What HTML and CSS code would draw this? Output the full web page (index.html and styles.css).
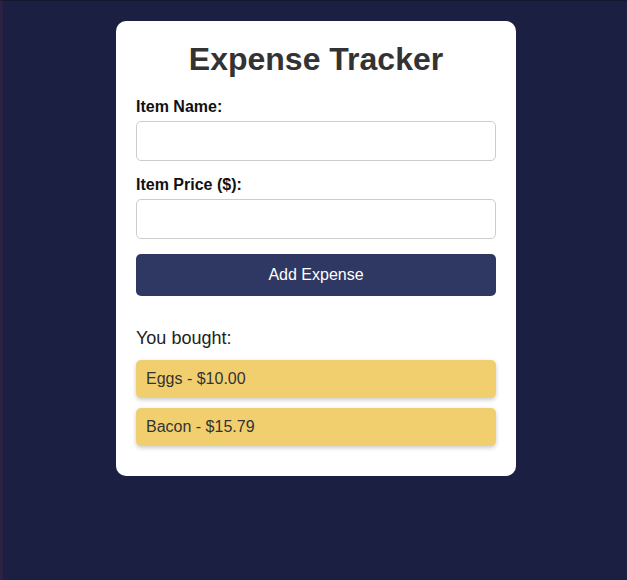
FILE: index.html
```html
<!DOCTYPE html>
<html>
<head>
<meta charset="utf-8">
<link rel="stylesheet" href="styles.css">
</head>
<body>
<div class="page">
  <div class="card">
    <h1 class="title">Expense Tracker</h1>
    <label class="label">Item Name:</label>
    <input class="field" type="text">
    <label class="label">Item Price ($):</label>
    <input class="field" type="text">
    <button class="add">Add Expense</button>
    <h3 class="bought">You bought:</h3>
    <div class="item">Eggs - $10.00</div>
    <div class="item">Bacon - $15.79</div>
  </div>
</div>
</body>
</html>
```

FILE: styles.css
```css
html, body {
  margin: 0;
  padding: 0;
  background: #1b1f42;
  font-family: "Liberation Sans", Arial, sans-serif;
}
.page {
  min-height: 100vh;
  box-sizing: border-box;
  border-top: 1px solid #15182f;
  border-left: 3px solid #2a2143;
  padding: 20px 0 0 2px;
}
.card {
  width: 400px;
  box-sizing: border-box;
  margin: 0 auto;
  background: #fff;
  border-radius: 10px;
  padding: 20px;
  display: flex;
  flex-direction: column;
}
.title {
  margin: 0 0 20px;
  font-size: 32px;
  text-align: center;
  color: #333;
  font-weight: bold;
}
.label {
  display: block;
  font-weight: bold;
  font-size: 16px;
  color: #111;
  margin-bottom: 5px;
}
.field {
  height: 40px;
  box-sizing: border-box;
  border: 1px solid #ccc;
  border-radius: 5px;
  margin: 0 0 15px;
  padding: 8px;
  font-size: 16px;
}
.add {
  height: 42px;
  border: none;
  border-radius: 5px;
  background: #2f3763;
  color: #fff;
  font-size: 16px;
  font-family: "Liberation Sans", Arial, sans-serif;
}
.bought {
  margin: 32px 0 11px;
  font-size: 18px;
  font-weight: normal;
  color: #222;
}
.item {
  background: #f2cf6e;
  border-radius: 5px;
  padding: 10px;
  font-size: 16px;
  color: #333;
  margin-bottom: 10px;
  box-shadow: 0 2px 4px rgba(0, 0, 0, 0.2);
}
```
